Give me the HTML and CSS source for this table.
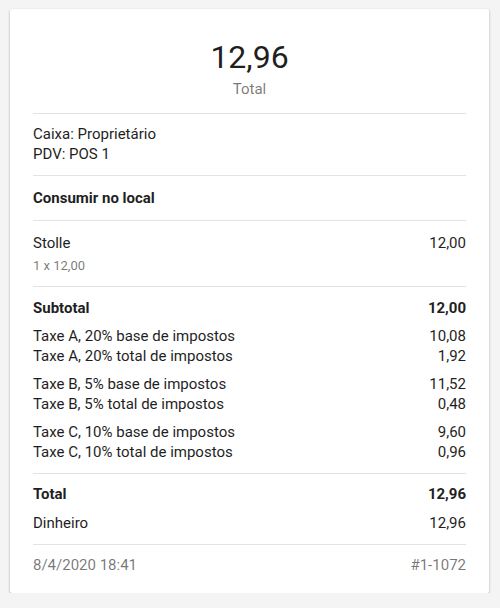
FILE: index.html
```html
<!DOCTYPE html>
<html lang="pt">
<head>
<meta charset="utf-8">
<title>Recibo</title>
<link rel="stylesheet" href="styles.css">
</head>
<body>
<div class="card">
  <div class="section header">
    <div class="amount">12,96</div>
    <div class="caption">Total</div>
  </div>
  <div class="section info">
    <div class="line">Caixa: Proprietário</div>
    <div class="line">PDV: POS 1</div>
  </div>
  <div class="section mode">
    <div class="line bold">Consumir no local</div>
  </div>
  <div class="section items">
    <div class="row"><span>Stolle</span><span>12,00</span></div>
    <div class="sub">1 x 12,00</div>
  </div>
  <div class="section taxes">
    <div class="row bold"><span>Subtotal</span><span>12,00</span></div>
    <div class="group">
      <div class="row"><span>Taxe A, 20% base de impostos</span><span>10,08</span></div>
      <div class="row"><span>Taxe A, 20% total de impostos</span><span>1,92</span></div>
    </div>
    <div class="group">
      <div class="row"><span>Taxe B, 5% base de impostos</span><span>11,52</span></div>
      <div class="row"><span>Taxe B, 5% total de impostos</span><span>0,48</span></div>
    </div>
    <div class="group">
      <div class="row"><span>Taxe C, 10% base de impostos</span><span>9,60</span></div>
      <div class="row"><span>Taxe C, 10% total de impostos</span><span>0,96</span></div>
    </div>
  </div>
  <div class="section totals">
    <div class="row bold"><span>Total</span><span>12,96</span></div>
    <div class="row pay"><span>Dinheiro</span><span>12,96</span></div>
  </div>
  <div class="section footer">
    <div class="row muted"><span>8/4/2020 18:41</span><span>#1-1072</span></div>
  </div>
</div>
</body>
</html>
```
FILE: styles.css
```css
html, body {
  margin: 0;
  padding: 0;
  background: #f4f4f4;
}
body {
  padding: 9px 11px 0 10px;
  font-family: Roboto, "Noto Sans", sans-serif;
  font-size: 15px;
  line-height: 20px;
  color: #1f1f1f;
}
.card {
  background: #fff;
  border-radius: 2px;
  box-shadow: 0 1px 3px rgba(0, 0, 0, 0.2), 0 1px 2px rgba(0, 0, 0, 0.12);
  padding: 0 23px 18px;
}
.section {
  border-top: 1px solid #e3e3e3;
  padding: 10px 0 11px;
}
.section.header {
  border-top: none;
  padding: 28px 0 14px;
  text-align: center;
}
.amount {
  font-size: 32px;
  line-height: 40px;
}
.caption {
  margin-top: 2px;
  color: rgba(0, 0, 0, 0.54);
}
.mode {
  padding: 12px 0 12px;
}
.items {
  padding: 12px 0 10px;
}
.bold {
  font-weight: 700;
}
.row {
  display: flex;
  justify-content: space-between;
}
.sub {
  margin-top: 3px;
  font-size: 13px;
  color: rgba(0, 0, 0, 0.54);
}
.taxes {
  padding: 11px 0 11px;
}
.group {
  margin-top: 8px;
}
.group:first-of-type {
  margin-top: 7px;
}
.totals {
  padding: 10px 0 11px;
}
.pay {
  margin-top: 9px;
}
.footer {
  padding: 10px 0 0;
}
.muted {
  color: rgba(0, 0, 0, 0.54);
}
```
